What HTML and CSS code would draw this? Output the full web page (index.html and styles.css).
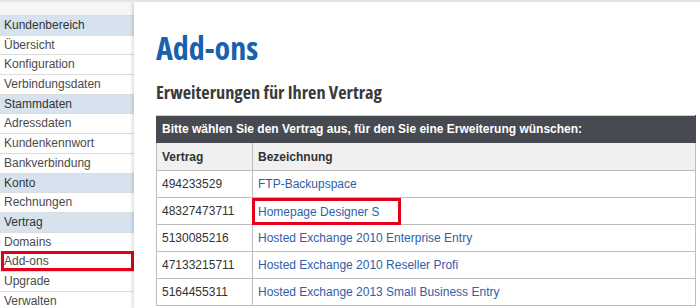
FILE: index.html
```html
<!DOCTYPE html>
<html lang="de">

<head>
  <meta charset="UTF-8">
  <meta name="viewport" content="width=device-width, initial-scale=1.0">
  <title>Add-ons</title>
  <link rel="stylesheet" href="styles.css">
</head>

<body>
  <div class="page">
    <ul class="menu">
      <li class="head">Kundenbereich</li>
      <li class="item"><a href="">Übersicht</a></li>
      <li class="item"><a href="">Konfiguration</a></li>
      <li class="item"><a href="">Verbindungsdaten</a></li>
      <li class="head">Stammdaten</li>
      <li class="item"><a href="">Adressdaten</a></li>
      <li class="item"><a href="">Kundenkennwort</a></li>
      <li class="item"><a href="">Bankverbindung</a></li>
      <li class="head">Konto</li>
      <li class="item"><a href="">Rechnungen</a></li>
      <li class="head">Vertrag</li>
      <li class="item"><a href="">Domains</a></li>
      <li class="item marked"><a href="">Add-ons</a></li>
      <li class="item"><a href="">Upgrade</a></li>
      <li class="item"><a href="">Verwalten</a></li>
    </ul>

    <div class="content">
      <h1 class="title">Add-ons</h1>
      <h2 class="subtitle">Erweiterungen für Ihren Vertrag</h2>

      <table class="contracts">
        <tr>
          <th class="caption" colspan="2">Bitte wählen Sie den Vertrag aus, für den Sie eine Erweiterung wünschen:</th>
        </tr>
        <tr class="cols">
          <th class="num">Vertrag</th>
          <th>Bezeichnung</th>
        </tr>
        <tr>
          <td class="num">494233529</td>
          <td><a href="">FTP-Backupspace</a></td>
        </tr>
        <tr>
          <td class="num">48327473711</td>
          <td><a href="" class="marked">Homepage Designer S</a></td>
        </tr>
        <tr>
          <td class="num">5130085216</td>
          <td><a href="">Hosted Exchange 2010 Enterprise Entry</a></td>
        </tr>
        <tr>
          <td class="num">47133215711</td>
          <td><a href="">Hosted Exchange 2010 Reseller Profi</a></td>
        </tr>
        <tr>
          <td class="num">5164455311</td>
          <td><a href="">Hosted Exchange 2013 Small Business Entry</a></td>
        </tr>
      </table>
    </div>
  </div>
</body>

</html>
```

FILE: styles.css
```css
body {
  margin: 0;
  background-color: #f6f6f6;
  font-family: "Liberation Sans", Arial, sans-serif;
  font-size: 12px;
  color: #333;
}

a {
  text-decoration: none;
}

ul {
  padding: 0;
  margin: 0;
  list-style: none;
}

.page {
  display: flex;
  height: 308px;
  overflow: hidden;
  border-top: 2px solid #e4e4e4;
}

/* linke Navigation */
.menu {
  width: 134px;
  flex-shrink: 0;
  padding-top: 13px;
}

.menu li {
  height: 18.7px;
  line-height: 19px;
  padding-left: 4px;
  border-top: 1px solid #dcdcdc;
}

.menu .head {
  background-color: #d6e3ef;
  color: #333;
}

.menu .item {
  background-color: #fff;
}

.menu .item a {
  display: block;
  color: #4a4a4a;
}

.menu .marked {
  outline: 3px solid #e2001a;
  outline-offset: -3px;
  margin-left: 1px;
  padding-left: 3px;
}

/* Inhalt */
.content {
  flex: 1;
  background-color: #fff;
  padding: 0 0 0 22px;
  box-shadow: -2px 0 3px rgba(0, 0, 0, 0.12);
}

.title,
.subtitle {
  font-family: "Open Sans", "Liberation Sans", sans-serif;
  font-stretch: 75%;
  font-weight: bold;
}

.title {
  margin: 26px 0 0;
  font-size: 32px;
  line-height: 40px;
  color: #1761ae;
}

.subtitle {
  margin: 12px 0 0;
  font-size: 18.3px;
  line-height: 24px;
  color: #3a3a3a;
}

.contracts {
  width: 540px;
  margin-top: 11px;
  border-collapse: collapse;
  border: 1px solid #bdbdbd;
}

.contracts th,
.contracts td {
  height: 26px;
  padding: 0 5px;
  text-align: left;
  border: 1px solid #bdbdbd;
}

.contracts .caption {
  background-color: #474a51;
  color: #fff;
  border-color: #474a51;
  border-top: 1px solid #d0d0d0;
}

.contracts .cols th {
  height: 27px;
  background-color: #f0f0f0;
  color: #333;
}

.contracts .num {
  width: 85px;
}

.contracts td a {
  color: #2f5ea8;
}

.contracts a.marked {
  display: inline-block;
  outline: 3px solid #e2001a;
  padding: 4px 19px 3px 3px;
  margin-left: -3px;
}
```
